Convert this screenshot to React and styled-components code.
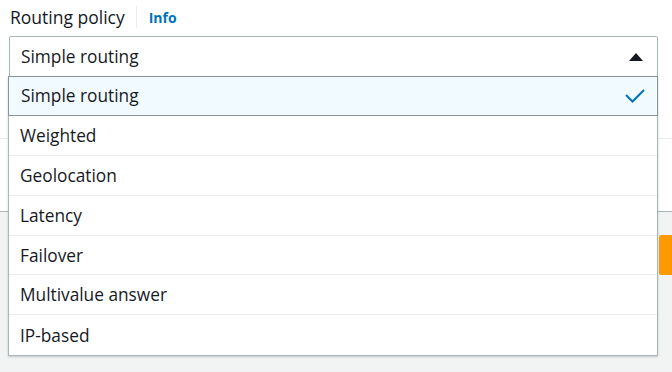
import React, { useState } from 'react';
import styled, { createGlobalStyle } from 'styled-components';

const GlobalStyle = createGlobalStyle`
  body {
    margin: 0;
    background: #ffffff;
    font-family: "Open Sans", "Noto Sans", Arial, sans-serif;
    color: #16191f;
  }
`;

const Page = styled.div`
  width: 672px;
  height: 372px;
  overflow: hidden;
  display: flex;
  flex-direction: column;
  background: #f2f3f3;
`;

// White form panel behind the menu
const Panel = styled.div`
  background: #ffffff;
  height: 211px;
  border-bottom: 1px solid #aab7b8;
  display: flex;
  flex-direction: column;
`;

const Field = styled.div`
  padding: 4px 14px 0 9px;
  height: 134px;
  border-bottom: 1px solid #eaeded;
`;

const LabelRow = styled.div`
  display: flex;
  align-items: center;
  height: 26px;
  margin-left: 1px;
  margin-bottom: 6px;
`;

const Label = styled.span`
  font-size: 17.5px;
  color: #16191f;
  padding-right: 11px;
  border-right: 1px solid #eaeded;
  line-height: 22px;
`;

const InfoLink = styled.a`
  font-size: 14px;
  font-weight: 700;
  color: #0073bb;
  margin-left: 12px;
  text-decoration: none;
`;

const SelectWrap = styled.div`
  position: relative;
`;

const Trigger = styled.button`
  width: 100%;
  height: 41px;
  display: flex;
  align-items: center;
  justify-content: space-between;
  padding: 0 14px 0 11px;
  box-sizing: border-box;
  background: #ffffff;
  border: 1px solid #aab7b8;
  border-radius: 2px 2px 0 0;
  font-family: inherit;
  font-size: 17.3px;
  color: #16191f;
  cursor: pointer;
`;

const Menu = styled.ul`
  position: absolute;
  top: 40px;
  left: -1px;
  right: 0;
  margin: 0;
  padding: 0;
  list-style: none;
  background: #ffffff;
  border: 1px solid #aab7b8;
  border-top: none;
  box-shadow: 0 1px 2px rgba(0, 22, 40, 0.2);
  z-index: 10;
`;

const Option = styled.li`
  height: 39.9px;
  box-sizing: border-box;
  display: flex;
  align-items: center;
  justify-content: space-between;
  padding: 0 12px 0 11px;
  font-size: 17.3px;
  color: #16191f;
  background: ${({ $selected }) => ($selected ? '#f1faff' : '#ffffff')};
  border: ${({ $selected }) => ($selected ? '1px solid #879596' : 'none')};
  border-bottom: 1px solid ${({ $selected }) => ($selected ? '#879596' : '#eaeded')};
  margin: ${({ $selected }) => ($selected ? '0 -1px 0 -1px' : '0')};
  padding-left: ${({ $selected }) => ($selected ? '12px' : '11px')};

  &:last-child {
    border-bottom: none;
  }
`;

const Rest = styled.div`
  flex: 1;
`;

const Footer = styled.div`
  flex: 1;
  display: flex;
  justify-content: flex-end;
  padding-top: 23px;
`;

const PrimaryButton = styled.button`
  width: 13px;
  height: 40px;
  border: none;
  border-radius: 2px 0 0 2px;
  background: #ff9900;
  padding: 0;
`;

const CaretUp = () => (
  <svg width="14" height="8" viewBox="0 0 14 8">
    <path d="M0 8 L7 0 L14 8 Z" fill="#16191f" />
  </svg>
);

const Check = () => (
  <svg width="20" height="14" viewBox="0 0 20 14">
    <path d="M1 6 L7.5 12.5 L19 1" fill="none" stroke="#0073bb" strokeWidth="2" />
  </svg>
);

const options = [
  'Simple routing',
  'Weighted',
  'Geolocation',
  'Latency',
  'Failover',
  'Multivalue answer',
  'IP-based',
];

const App = () => {
  const [value, setValue] = useState('Simple routing');

  return (
    <>
      <GlobalStyle />
      <Page>
        <Panel>
          <Field>
            <LabelRow>
              <Label>Routing policy</Label>
              <InfoLink href="#">Info</InfoLink>
            </LabelRow>
            <SelectWrap>
              <Trigger type="button">
                <span>{value}</span>
                <CaretUp />
              </Trigger>
              <Menu>
                {options.map((o) => (
                  <Option key={o} $selected={o === value} onClick={() => setValue(o)}>
                    <span>{o}</span>
                    {o === value && <Check />}
                  </Option>
                ))}
              </Menu>
            </SelectWrap>
          </Field>
          <Rest />
        </Panel>
        <Footer>
          <PrimaryButton type="button" />
        </Footer>
      </Page>
    </>
  );
};

export default App;
